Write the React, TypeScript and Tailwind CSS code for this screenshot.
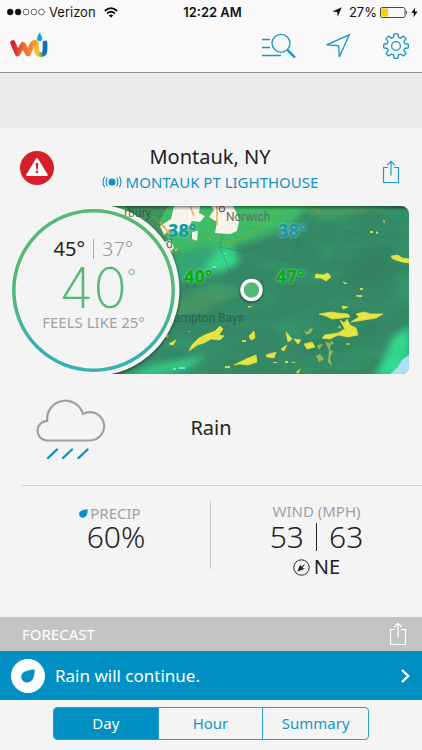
import { useState } from "react";

const tabs = ["Day", "Hour", "Summary"];

function StatusBar() {
    return (
        <div className="grid h-6 grid-cols-[1fr_auto_1fr] items-center pl-[7px] pr-1 font-['Inter','Liberation_Sans',sans-serif] text-[13px] leading-4 text-[#111]">
            <div className="flex items-center gap-1">
                <svg width="38" height="8" viewBox="0 0 38 8" stroke="#111" strokeWidth="0.6">
                    <circle cx="3.2" cy="4" r="2.9" fill="#111" />
                    <circle cx="11.1" cy="4" r="2.9" fill="#111" />
                    <circle cx="19" cy="4" r="2.9" fill="none" />
                    <circle cx="26.9" cy="4" r="2.9" fill="none" />
                    <circle cx="34.5" cy="4" r="2.9" fill="none" />
                </svg>
                <span>Verizon</span>
                <svg className="ml-1" width="14" height="11" viewBox="0 0 14 11" fill="none" stroke="#111" strokeWidth="1.8">
                    <path d="M0.8 4 Q7 -1.8 13.2 4" />
                    <path d="M3.1 6.5 Q7 3 10.9 6.5" />
                    <path d="M7 10.8 L4.7 8.3 Q7 6.5 9.3 8.3 Z" fill="#111" stroke="none" />
                </svg>
            </div>
            <span className="font-semibold">12:22 AM</span>
            <div className="flex items-center justify-end gap-[3px]">
                <svg className="mr-1" width="10" height="10" viewBox="0 0 10 10" fill="#111">
                    <path d="M9.7 0.3 L5.7 9.7 L5.2 4.9 L0.3 4.4 Z" />
                </svg>
                <span>27%</span>
                <svg width="28" height="11" viewBox="0 0 28 11">
                    <rect x="0.5" y="0.5" width="24.5" height="10" rx="1.8" fill="none" stroke="#333" strokeWidth="0.9" />
                    <rect x="1.4" y="1.4" width="6.6" height="8.2" rx="0.8" fill="#fc0" />
                    <path d="M26 3.5 Q28 5.5 26 7.5 Z" fill="#333" />
                </svg>
                <svg width="7" height="11" viewBox="0 0 7 11" fill="#111">
                    <path d="M4.2 0.5 L0.3 6 H3 L2.3 10.5 L6.7 4.6 H3.9 Z" />
                </svg>
            </div>
        </div>
    );
}

function Logo() {
    return (
        <svg width="38" height="26" viewBox="0 0 38 26" fill="none" strokeLinecap="round" strokeLinejoin="round">
            <defs>
                <linearGradient id="wLetter" x1="0" x2="1" y1="0" y2="0">
                    <stop offset="0" stopColor="#d6202e" />
                    <stop offset="0.5" stopColor="#ef6a35" />
                    <stop offset="1" stopColor="#f89a2c" />
                </linearGradient>
                <linearGradient id="uLetter" x1="0" x2="1" y1="0" y2="0">
                    <stop offset="0" stopColor="#fbb034" />
                    <stop offset="0.35" stopColor="#f6c62c" />
                    <stop offset="0.65" stopColor="#5fb56b" />
                    <stop offset="0.85" stopColor="#0f72c0" />
                </linearGradient>
            </defs>
            <path d="M24 10.8 Q26.6 9.6 26.6 13 V17.5 Q26.6 22.6 30.8 22.6 Q35 22.6 35 17.5 V10.8" stroke="url(#uLetter)" strokeWidth="4.8" />
            <path d="M2.8 10.8 L7.6 21.8 L13 12.5 L18 21.8 L22.5 12 Q23.4 10.6 25 11" stroke="url(#wLetter)" strokeWidth="5.2" />
            <path d="M29.6 0.5 Q32.2 4 32.2 6.4 A2.6 2.6 0 0 1 27 6.4 Q27 4 29.6 0.5Z" fill="#1ba4dd" />
        </svg>
    );
}

function ShareIcon() {
    return (
        <svg width="18" height="24" viewBox="0 0 18 24" fill="none" stroke="currentColor" strokeWidth="1.2">
            <path d="M6 7.5 H1.5 V22.5 H16.5 V7.5 H12" />
            <path d="M9 15.5 V1.5 M5.2 5.2 L9 1.4 L12.8 5.2" />
        </svg>
    );
}

function Drop({ size }: { size: number }) {
    return (
        <svg width={size} height={size} viewBox="0 0 14 14" fill="currentColor">
            <path d="M13.6 0.4 Q13.9 7.5 10.8 11.3 C8.8 13.8 4.5 14.2 2 12 C-0.6 9.7 -0.3 5.8 2.3 3.6 C5 1.3 9 0.8 13.6 0.4Z" />
        </svg>
    );
}

function RadarMap() {
    return (
        <div className="relative -ml-[82px] h-[168px] min-w-0 flex-1 overflow-hidden rounded-r-lg">
            <svg className="h-full w-full" viewBox="93 206 316 168" preserveAspectRatio="xMinYMid slice">
                <defs>
                    <filter id="soft" x="-20%" y="-20%" width="140%" height="140%" colorInterpolationFilters="sRGB">
                        <feGaussianBlur stdDeviation="3.5" />
                    </filter>
                    <filter id="haze" colorInterpolationFilters="sRGB">
                        <feTurbulence type="fractalNoise" baseFrequency="0.018 0.05" numOctaves="3" seed="8" />
                        <feColorMatrix values="0 0 0 0 0.22  0 0 0 0 0.7  0 0 0 0 0.48  2 0 0 0 -0.75" />
                    </filter>
                    <filter id="drop" x="-20%" y="-20%" width="140%" height="140%" colorInterpolationFilters="sRGB">
                        <feDropShadow dx="0" dy="1" stdDeviation="1.5" floodOpacity="0.6" />
                    </filter>
                    <linearGradient id="topShade" x1="0" x2="0" y1="0" y2="1">
                        <stop offset="0" stopOpacity="0.45" />
                        <stop offset="1" stopOpacity="0" />
                    </linearGradient>
                </defs>
                <rect x="93" y="206" width="316" height="168" fill="#358765" />
                <g filter="url(#soft)">
                    <path d="M90 200 H290 L310 206 L290 225 L255 240 L215 250 L172 252 L90 250Z" fill="#3fbd67" />
                    <path d="M305 200 H400 L345 218 L312 219Z" fill="#459c61" />
                    <path d="M165 258 L205 245 L235 250 L232 266 L205 276 L170 285Z" fill="#35a573" />
                    <path d="M216 250 L232 246 L240 262 L222 272 L202 270Z" fill="#36d88c" />
                    <path d="M170 305 L205 285 L245 290 L205 312 L170 322Z" fill="#459365" />
                    <path d="M410 326 L393 337 L384 358 L375 376 H410Z" fill="#32dd91" />
                    <path d="M125 376 L150 366 L205 355 L190 368 L150 378Z" fill="#35ce89" />
                    <path d="M290 320 L345 308 L380 320 L360 345 L305 350Z" fill="#338262" />
                    <path d="M330 248 L395 245 L400 290 L340 285Z" fill="#348263" />
                </g>
                <rect x="93" y="206" width="316" height="168" filter="url(#haze)" opacity="0.35" />
                <path d="M125 206 H168 L160 220 L170 245 L176 252 L150 240Z" fill="#42905d" />
                <path d="M174 206 H200 L199 213 L205 216 L200 222 L192 221 L188 228 L180 228 L178 234 L170 229 L164 235 L160 226 L171 219Z M211 206 H233 L237 214 L239 221 L237 231 L230 234 L215 233 L217 222 L209 217 L214 210Z M163 242 L171 240 L174 248 L170 252Z M192 232 L198 231 L197 241 L192 239Z" fill="#f7f4ec" />
                <g fill="none" stroke="#f6a83d">
                    <path d="M190 206 L194 216 M160 222 L171 236 M217 206 V225" strokeWidth="1.4" />
                    <path d="M170 252 L178 249" strokeWidth="2" strokeDasharray="3 2" />
                </g>
                <g fill="none" stroke="#7fae2d" strokeOpacity="0.6" strokeWidth="1.3">
                    <path d="M190 244 L208 235 L225 241 L243 239 L259 228 L272 216 L275 207 M308 206 L322 213 M153 216 L165 228" />
                </g>
                <g fill="none" stroke="#227f72" strokeOpacity="0.55" strokeWidth="0.8">
                    <path d="M222 234 L220 248 L238 290 M220 247 L290 261 L315 220 L355 234 L382 231 L409 217 M295 263 L297 240 L315 216 M245 284 L278 276" />
                    <path d="M248 206 L250 228 L276 229 M283 211 L300 216 M260 230 L255 244" stroke="#569d40" />
                </g>
                <path d="M172 310 L195 302 L240 296 L244 292" fill="none" stroke="#63954b" strokeOpacity="0.5" />
                <g fill="#e6e440" stroke="#e6e440" strokeWidth="0.7" strokeLinejoin="round">
                    <path d="M391 256 L398 255 L402 258 L409 259 V263 L402 262 L393 259Z" />
                    <path d="M316 274 L323 275 L328 273 L331 277 L326 281 L321 278 L315 278Z" />
                    <path d="M319 314 L331 312 L337 313 L348 314 L350 317 L342 318 L332 319 L326 316Z" />
                    <path d="M356 314 L364 312 L371 314 L383 314 L376 318 L364 320 L351 322 L359 317Z" />
                    <path d="M340 320 L344 323 L347 319 L350 325 L356 328 L358 335 L348 337 L338 335 L330 339 L322 338 L325 335 L338 333 L345 329Z" />
                    <path d="M192 345 L199 338 L207 334 L215 331 L220 326 L223 329 L219 335 L224 336 L220 340 L211 339 L204 343 L197 345 L189 351Z" />
                    <path d="M234 365 L246 359 L256 355 L257 362 L248 365 L240 364Z M266 355 L276 352 L274 358 L267 357Z M281 349 L287 345 L284 351Z" />
                    <path d="M286 332 L292 339 L288 342Z M294 339 L301 340 L298 344Z M304 344 L312 342 L315 347 L307 349Z M249 336 L254 331 L255 338 L251 340Z M169 344 L176 340 L173 345Z M342 306 L348 307 L343 309Z" />
                </g>
                <g fill="#d3da45">
                    <path d="M383 219 L385 221 L384 224Z M370 231 H373 V233 H370Z M376 231 L379 233 L376 234Z M343 281 L348 284 H344Z M356 295 H362 V297 H357Z M360 288 H363 V290 H360Z M188 331 L191 332 H188Z M242 340 H246 V342 H242Z M248 306 H253 L248 308Z M225 366 H230 V368 H225Z M387 231 L389 236Z" />
                    <path d="M273 362 h4 v1 h-4z M285 361 h3 v2 h-3z M292 362 h3 v1 h-3z M296 372 L301 368 L298 374Z M165 333 L169 336 L166 338Z" />
                </g>
                <g fill="#b9c94e" opacity="0.75">
                    <path d="M304 331 L308 332 L309 329 L313 328 L311 333 L306 335Z M325 342 L331 343 L330 350 L333 351 L330 358 L332 366 L328 362 L329 350Z M317 345 L323 344 L319 350Z M316 356 L320 354 L324 359 L319 362Z M331 340 L334 343 L331 345Z" />
                    <path d="M346 343 h4 v2 h-4z M338 326 h3 v2 h-3z" />
                </g>
                <path d="M409 355 L402 360 L397 368 L390 374 H409Z" fill="#aee0f6" />
                <path d="M173 368 h3 v2 h-3z M179 367 h6 v2 h-6z M212 266 h4 v2 h-4z M223 253 h3 v1 h-3z" fill="#6fdcf0" />
                <circle cx="222" cy="209" r="2.8" fill="#ddd" stroke="#555" strokeWidth="1" />
                <rect x="93" y="206" width="316" height="4" fill="url(#topShade)" />
                <circle cx="93.5" cy="290" r="86" fill="#f4f4f4" filter="url(#drop)" />
                <circle cx="251.5" cy="290" r="9.5" fill="#55b873" stroke="#fff" strokeWidth="3.5" filter="url(#drop)" />
            </svg>
            <div className="font-['Roboto',sans-serif] text-xs leading-3 text-[#26563f]/80">
                <span className="absolute left-[31px] top-px">rbury</span>
                <span className="absolute left-[133px] top-[5px] text-[#5d6f63]">Norwich</span>
                <span className="absolute left-[73px] top-[32px]">d</span>
                <span className="absolute left-[81px] top-[106px]">ampton Bays</span>
            </div>
            <div className="font-['Noto_Sans',sans-serif] text-[18px] leading-5 font-extrabold [text-shadow:0_0_3px_#ffffff80]">
                <span className="absolute left-[75px] top-[14px] text-[#159aa8]">38°</span>
                <span className="absolute left-[185px] top-[14px] text-[#159aa8]">38°</span>
                <span className="absolute left-[91px] top-[60px] text-[#08ad10]">40°</span>
                <span className="absolute left-[183px] top-[60px] text-[#08ad10]">47°</span>
            </div>
        </div>
    );
}

function TemperatureDial() {
    return (
        <div className="relative z-10 size-[163px] shrink-0">
            <svg className="absolute inset-0" width="163" height="163" viewBox="0 0 163 163" fill="none">
                <defs>
                    <linearGradient id="ring" x1="0" x2="0" y1="0" y2="1">
                        <stop offset="0.45" stopColor="#55b873" />
                        <stop offset="0.9" stopColor="#35b0b5" />
                    </linearGradient>
                </defs>
                <circle cx="81.5" cy="81.5" r="79.7" stroke="url(#ring)" strokeWidth="3.5" />
            </svg>
            <div className="relative flex flex-col items-center pt-7">
                <div className="flex items-center gap-2 text-xl leading-6">
                    <span>45°</span>
                    <span className="h-5 w-px bg-[#aaa]" />
                    <span className="font-light text-[#999]">37°</span>
                </div>
                <div className="flex h-[51px] pl-2 font-['Inter',sans-serif] font-extralight text-[#55b873]">
                    <span className="text-[56px] leading-[54px]">40</span>
                    <span className="text-xl leading-8">°</span>
                </div>
                <span className="text-[15px] leading-5 text-[#a2a2a2]">FEELS LIKE 25°</span>
            </div>
        </div>
    );
}

export default function App() {
    const [tab, setTab] = useState("Day");

    return (
        <div className="min-h-screen bg-[#f4f4f4] font-['Noto_Sans','Liberation_Sans',sans-serif] text-[#222]">
            <header className="border-b border-[#8c8c8c] bg-[#f9f9f9]">
                <StatusBar />
                <nav className="flex h-12 items-center px-[10px]">
                    <a href="#home" aria-label="Home" className="pb-[6px]">
                        <Logo />
                    </a>
                    <div className="ml-auto flex items-center gap-7 pb-1 pr-[3px] text-[#1496c8]">
                        <button type="button" aria-label="Search">
                            <svg width="36" height="26" viewBox="0 0 36 26" fill="none" stroke="currentColor" strokeWidth="1.3">
                                <path d="M1 6.5 H9 M1 14.5 H9 M1 22.5 H20" />
                                <circle cx="20" cy="10.3" r="9" />
                                <path d="M26.3 16.8 L34 24.5" strokeWidth="2.4" />
                            </svg>
                        </button>
                        <button type="button" aria-label="My location">
                            <svg width="26" height="26" viewBox="0 0 26 26" fill="none" stroke="currentColor" strokeWidth="1.3">
                                <path d="M24.3 1.8 L14.4 24 L13.6 12.6 L1.6 11.8 Z" />
                            </svg>
                        </button>
                        <button type="button" aria-label="Settings" className="ml-1">
                            <svg width="26" height="26" viewBox="0 0 26 26" fill="none" stroke="currentColor" strokeWidth="1.3" strokeLinejoin="round">
                                <circle cx="13" cy="13" r="4.4" />
                                <path d="M11.2 0.8 H14.8 L15.5 4.2 L17.6 5.1 L20.5 3.1 L23 5.6 L21 8.5 L21.9 10.5 L25.3 11.2 V14.8 L21.9 15.5 L21 17.6 L23 20.5 L20.5 23 L17.6 21 L15.5 21.9 L14.8 25.3 H11.2 L10.5 21.9 L8.5 21 L5.6 23 L3.1 20.5 L5.1 17.6 L4.2 15.5 L0.8 14.8 V11.2 L4.2 10.5 L5.1 8.5 L3.1 5.6 L5.6 3.1 L8.5 5.1 L10.5 4.2 Z" />
                            </svg>
                        </button>
                    </div>
                </nav>
            </header>

            <div className="h-[55px] bg-[#eaeaea]" />

            <main>
                <section className="flex items-center px-5 pb-[13px] pt-[15px]">
                    <button type="button" aria-label="Weather alert">
                        <svg width="34" height="34" viewBox="0 0 34 34">
                            <circle cx="17" cy="17" r="17" fill="#d71f2b" />
                            <path d="M17 8 L26.8 24 H7.2 Z" fill="#fff" stroke="#fff" strokeWidth="2" strokeLinejoin="round" />
                            <path d="M15.7 12 H18.3 L17.7 18.5 H16.3 Z M15.8 19.7 H18.2 V22 H15.8 Z" fill="#d71f2b" />
                        </svg>
                    </button>
                    <div className="flex flex-1 flex-col items-center pr-4">
                        <h1 className="text-xl leading-7">Montauk, NY</h1>
                        <a href="#station" className="flex items-center gap-1 text-[15px] leading-[22px] text-[#1490c4]">
                            <svg width="20" height="12" viewBox="0 0 20 12" fill="none" stroke="currentColor" strokeWidth="1.1">
                                <circle cx="10" cy="6" r="3.6" fill="currentColor" stroke="none" />
                                <path d="M5.3 1.8 Q3 6 5.3 10.2 M14.7 1.8 Q17 6 14.7 10.2 M2.6 0.8 Q-0.6 6 2.6 11.2 M17.4 0.8 Q20.6 6 17.4 11.2" />
                            </svg>
                            MONTAUK PT LIGHTHOUSE
                        </a>
                    </div>
                    <button type="button" aria-label="Share conditions" className="pr-[2px] pt-2 text-[#1e9bcb]">
                        <ShareIcon />
                    </button>
                </section>

                <section className="flex items-center pl-3 pr-[13px]">
                    <TemperatureDial />
                    <RadarMap />
                </section>

                <section className="ml-[22px] flex h-[112px] items-center border-b border-[#cfcfcf]">
                    <svg className="ml-3 shrink-0" width="72" height="62" viewBox="0 0 72 62" fill="none" strokeLinecap="round">
                        <path d="M13.2 21.8 A18.3 18.3 0 0 1 49 14.9 A14.2 14.2 0 1 1 56 41.5 H12 A9.9 9.9 0 0 1 13.2 21.8Z" stroke="#a0a0a0" strokeWidth="2.2" />
                        <path d="M23 50.5 L14 59 M38 50.5 L29 59 M53.5 50.5 L44.5 59" stroke="#0a91c4" strokeWidth="2.4" />
                    </svg>
                    <p className="flex-1 pb-1 pr-[106px] text-center text-xl leading-7">Rain</p>
                </section>

                <section className="ml-[22px] flex pb-[38px] pt-[15px]">
                    <div className="flex w-[188px] flex-col items-center">
                        <h2 className="flex items-center gap-[2px] pt-[2px] pr-3 text-[15px] leading-5 text-[#a2a2a2]">
                            <span className="text-[#0a91c4]">
                                <Drop size={9} />
                            </span>
                            PRECIP
                        </h2>
                        <p className="text-3xl leading-7 font-light">60%</p>
                    </div>
                    <div className="h-[68px] w-px bg-[#c8c8c8]" />
                    <div className="flex flex-1 flex-col items-center">
                        <h2 className="text-[15px] leading-5 text-[#a2a2a2]">WIND (MPH)</h2>
                        <p className="flex items-center gap-3 text-3xl leading-8 font-light">
                            <span>53</span>
                            <span className="h-7 w-px bg-[#222]" />
                            <span>63</span>
                        </p>
                        <p className="flex items-center gap-1 pt-[2px] text-xl leading-6">
                            <svg width="17" height="17" viewBox="0 0 17 17">
                                <circle cx="8.5" cy="8.5" r="7.7" fill="none" stroke="#222" strokeWidth="1" />
                                <path d="M4.4 12.6 L7.2 5.4 L8.3 7.7 L12.4 4.4 L9.4 8.9 L11.9 9.8 Z" fill="#222" />
                            </svg>
                            NE
                        </p>
                    </div>
                </section>

                <section>
                    <div className="flex h-[34px] items-center justify-between bg-[#c4c4c4] pl-[22px] pr-[15px] text-white">
                        <h2 className="text-[15px] leading-5">FORECAST</h2>
                        <button type="button" aria-label="Share forecast">
                            <ShareIcon />
                        </button>
                    </div>
                    <a href="#forecast" className="flex h-[49px] items-center bg-[#0090c3] pl-[11px] pr-3 text-white">
                        <span className="flex size-[34px] items-center justify-center rounded-full bg-white text-[#0090c3]">
                            <Drop size={14} />
                        </span>
                        <span className="flex-1 pl-[10px] text-[17px] leading-6">Rain will continue.</span>
                        <svg width="9" height="14" viewBox="0 0 9 14" fill="none" stroke="#fff" strokeWidth="2.4">
                            <path d="M1 1 L7.2 7 L1 13" />
                        </svg>
                    </a>
                    <div className="px-[53px] pb-[10px] pt-[7px]">
                        <div className="grid h-[33px] grid-cols-3 divide-x divide-[#2a9fcc] overflow-hidden rounded border border-[#2a9fcc]">
                            {tabs.map((name) => (
                                <button
                                    key={name}
                                    type="button"
                                    onClick={() => setTab(name)}
                                    className={tab === name ? "bg-[#0090c3] text-[15px] text-white" : "text-[15px] text-[#1496c8]"}
                                >
                                    {name}
                                </button>
                            ))}
                        </div>
                    </div>
                </section>
            </main>
        </div>
    );
}
